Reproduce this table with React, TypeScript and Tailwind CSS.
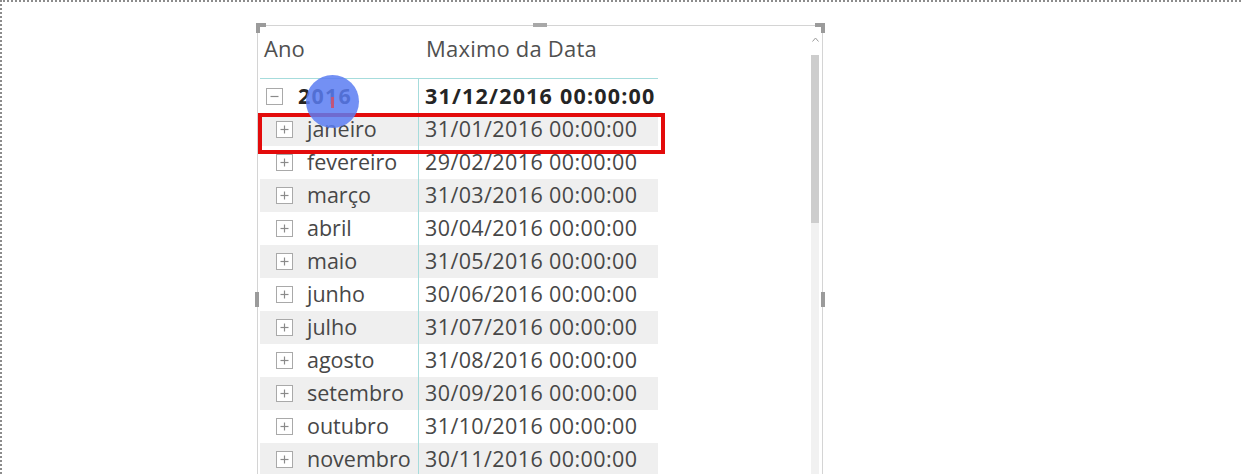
import React from "react";

const rows = [
  { m: "janeiro", d: "31/01/2016 00:00:00" },
  { m: "fevereiro", d: "29/02/2016 00:00:00" },
  { m: "março", d: "31/03/2016 00:00:00" },
  { m: "abril", d: "30/04/2016 00:00:00" },
  { m: "maio", d: "31/05/2016 00:00:00" },
  { m: "junho", d: "30/06/2016 00:00:00" },
  { m: "julho", d: "31/07/2016 00:00:00" },
  { m: "agosto", d: "31/08/2016 00:00:00" },
  { m: "setembro", d: "30/09/2016 00:00:00" },
  { m: "outubro", d: "31/10/2016 00:00:00" },
  { m: "novembro", d: "30/11/2016 00:00:00" },
];

function ToggleBox({ open }: { open?: boolean }) {
  return (
    <span className="flex items-center justify-center w-[17px] h-[17px] border border-[#a9a9a9] bg-white shrink-0">
      <svg width="11" height="11" viewBox="0 0 11 11">
        <line x1="1.5" y1="5.5" x2="9.5" y2="5.5" stroke="#8a8a8a" strokeWidth="1.2" />
        {!open && <line x1="5.5" y1="1.5" x2="5.5" y2="9.5" stroke="#8a8a8a" strokeWidth="1.2" />}
      </svg>
    </span>
  );
}

export default function App() {
  return (
    <div
      className="relative w-[1241px] h-[474px] overflow-hidden bg-white border-t-2 border-l-2 border-dotted border-[#8c8c8c] pl-[255px] pt-[23px]"
      style={{ fontFamily: '"Open Sans", "Noto Sans", sans-serif' }}
    >
      {/* visual frame */}
      <div className="relative flex w-[566px] h-[460px] border-t border-l border-r border-[#d4d4d4]">
        {/* table */}
        <div className="w-[400px] pl-[2px]">
          <div className="flex h-[53px] border-b border-[#a6dcdc] text-[22px] text-[#505050] leading-none">
            <div className="w-[159px] pl-[4px] pt-[11px]">Ano</div>
            <div className="pl-[7px] pt-[11px] whitespace-nowrap tracking-[0.2px]">Maximo da Data</div>
          </div>
          <div className="flex h-[34px] items-center text-[21.5px] font-bold text-[#252525]">
            <div className="flex items-center w-[159px] pl-[6px] gap-[15px] border-r border-[#a6dcdc] h-full">
              <ToggleBox open />
              <span className="tracking-[1.2px]">2016</span>
            </div>
            <div className="pl-[6px] whitespace-nowrap tracking-[1.2px]">31/12/2016 00:00:00</div>
          </div>
          {rows.map((r, i) => (
            <div
              key={r.m}
              className={
                "flex h-[33px] items-center text-[21.5px] text-[#474747] " + (i % 2 === 0 ? "bg-[#efefef]" : "bg-white")
              }
            >
              <div className="flex items-center w-[159px] pl-[16px] gap-[14px] border-r border-[#a6dcdc] h-full">
                <ToggleBox />
                <span className="whitespace-nowrap">{r.m}</span>
              </div>
              <div className="pl-[6px] whitespace-nowrap tracking-[0.4px]">{r.d}</div>
            </div>
          ))}
        </div>

        {/* scrollbar */}
        <div className="ml-auto mr-[3px] w-[8px] flex flex-col">
          <div className="h-[29px] flex items-start justify-center pt-[11px]">
            <svg width="7" height="5" viewBox="0 0 7 5">
              <path d="M0.5 4.5 L3.5 1 L6.5 4.5" fill="none" stroke="#9a9a9a" strokeWidth="1" />
            </svg>
          </div>
          <div className="h-[168px] bg-[#cdcdcd]" />
          <div className="flex-1 bg-[#f1f1f1]" />
        </div>

        {/* resize handles */}
        <div className="absolute -left-[2px] -top-[3px] w-[10px] h-[10px] border-t-[4px] border-l-[4px] border-[#9b9b9b]" />
        <div className="absolute -right-[3px] -top-[3px] w-[10px] h-[10px] border-t-[4px] border-r-[4px] border-[#9b9b9b]" />
        <div className="absolute left-[275px] -top-[3px] w-[14px] h-[4px] bg-[#a8a8a8]" />
        <div className="absolute -left-[3px] top-[266px] w-[4px] h-[15px] bg-[#9b9b9b]" />
        <div className="absolute -right-[3px] top-[266px] w-[4px] h-[15px] bg-[#9b9b9b]" />
      </div>

      {/* highlight box */}
      <div className="absolute left-[256px] top-[111px] w-[407px] h-[41px] border-[4px] border-[#e30b0b]" />

      {/* click indicator */}
      <div className="absolute left-[304px] top-[73px] w-[53px] h-[53px] rounded-full bg-[#5b7cf2]/85 flex items-center justify-center">
        <div className="w-[3px] h-[11px] bg-[#c2557a] mt-[2px]" />
      </div>
    </div>
  );
}
